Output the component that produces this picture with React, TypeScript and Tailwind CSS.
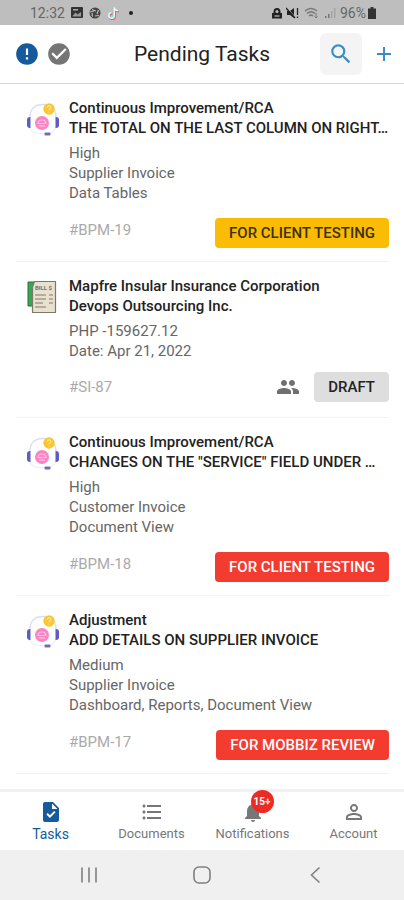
import type { ReactNode } from "react"
import { MdCheckCircle, MdError, MdSearch, MdAdd, MdPeople, MdNotifications, MdPersonOutline, MdFormatListBulleted, MdTask } from "react-icons/md"

interface Task {
  id: string
  kind: "ticket" | "bill"
  title: string
  subtitle: string
  details: string[]
  status: string
  tone: "amber" | "red" | "gray"
}

const tasks: Task[] = [
  {
    id: "#BPM-19",
    kind: "ticket",
    title: "Continuous Improvement/RCA",
    subtitle: "THE TOTAL ON THE LAST COLUMN ON RIGHT…",
    details: ["High", "Supplier Invoice", "Data Tables"],
    status: "FOR CLIENT TESTING",
    tone: "amber",
  },
  {
    id: "#SI-87",
    kind: "bill",
    title: "Mapfre Insular Insurance Corporation",
    subtitle: "Devops Outsourcing Inc.",
    details: ["PHP -159627.12", "Date: Apr 21, 2022"],
    status: "DRAFT",
    tone: "gray",
  },
  {
    id: "#BPM-18",
    kind: "ticket",
    title: "Continuous Improvement/RCA",
    subtitle: "CHANGES ON THE \"SERVICE\" FIELD UNDER …",
    details: ["High", "Customer Invoice", "Document View"],
    status: "FOR CLIENT TESTING",
    tone: "red",
  },
  {
    id: "#BPM-17",
    kind: "ticket",
    title: "Adjustment",
    subtitle: "ADD DETAILS ON SUPPLIER INVOICE",
    details: ["Medium", "Supplier Invoice", "Dashboard, Reports, Document View"],
    status: "FOR MOBBIZ REVIEW",
    tone: "red",
  },
]

const tones = {
  amber: "bg-[#fbbc05] text-[#3f3107]",
  red: "bg-[#f33b30] text-white",
  gray: "bg-[#dedede] text-[#222222]",
}

function TicketIcon() {
  return (
    <svg viewBox="0 0 34 34" className="size-[34px]" aria-hidden="true">
      <path d="M4 15C4 7 9 2.500 17 2.500S30 7 30 15" fill="none" stroke="#dcdafa" strokeWidth="1.500" />
      <path d="M3.500 24c1 6 5 8 15 7.500M30 24c-.5 4-3 6.500-7 7.500" fill="none" stroke="#eeedf8" strokeWidth="1.200" />
      <path d="M4.500 15v11H4a3 3 0 0 1-3-3v-5a3 3 0 0 1 3-3z" fill="#5f5bc0" />
      <path d="M29.500 15v11h.5a3 3 0 0 0 3-3v-5a3 3 0 0 0-3-3z" fill="#5f5bc0" />
      <rect x="18.500" y="30.500" width="6" height="3" rx="1" fill="#6b70be" />
      <circle cx="16" cy="21" r="7" fill="#fb84c4" />
      <path d="M12 21.500a4 3.500 0 0 1 8 0z" fill="#fb84c4" stroke="#ffc4e2" strokeWidth="1.200" />
      <path d="M13 24h6" stroke="#ffc4e2" strokeWidth="1.200" />
      <circle cx="23" cy="7" r="5.700" fill="#fbc62d" />
      <path d="M21.300 5.700a1.800 1.800 0 1 1 2.500 1.600q-.8.400-.8 1.300M23 9.800v.8" fill="none" stroke="#ffe68e" strokeWidth="1.200" />
    </svg>
  )
}

function BillIcon() {
  return (
    <svg viewBox="0 0 34 34" className="size-[34px]" aria-hidden="true">
      <path d="M2 2h9v24H2z" fill="#35a852" stroke="#2c6b3e" strokeWidth="1" />
      <path d="M8.500 1.500h21v31h-23V7z" fill="#e9e1d0" stroke="#7d766a" strokeWidth="1.200" strokeLinejoin="round" />
      <text x="9" y="10" fontSize="6" fontWeight="700" fill="#7b7165" fontFamily="Roboto">BILL $</text>
      <path d="M9 15h11M23 15h4M9 19h11M23 19h4M9 23h8M23 23h4M9 27h11" stroke="#82786b" strokeWidth="1.200" />
    </svg>
  )
}

function StatusBar() {
  return (
    <div className="flex h-[25px] items-center justify-between bg-[#bebebe] pr-7 pl-[30px] text-[#666666]">
      <div className="flex items-center gap-1.5">
        <span className="text-[14px] leading-5">12:32</span>
        <svg viewBox="0 0 12 12" className="size-3" aria-hidden="true">
          <rect width="12" height="11" rx="1" fill="#333333" />
          <path d="M1.500 9l3-3.500 2 2L10 5v4.500H1.500z" fill="#999999" />
          <path d="M2 2h5v1.500H2z" fill="#aaaaaa" />
        </svg>
        <svg viewBox="0 0 12 12" className="size-3" aria-hidden="true">
          <circle cx="6" cy="6" r="5.500" fill="#444444" />
          <path d="M3 2.500l4 1.500M9.500 3l-1.500 4M10 8.500L6 9M3.500 9.500L3 6M1 5l4-1" stroke="#bebebe" strokeWidth="1.200" />
        </svg>
        <svg viewBox="0 0 12 14" className="h-3.5 w-3" fill="none" strokeWidth="2" aria-hidden="true">
          <path d="M7.500 1.500v8a2.800 2.800 0 1 1-2.800-2.800M7.500 1.500q.5 3 4 3.300" stroke="#ef5a7a" transform="translate(.5 .8)" />
          <path d="M7 1v8a2.800 2.800 0 1 1-2.800-2.800M7 1q.5 3 4 3.300" stroke="#6ee0dc" />
          <path d="M7.300 1.400v8a2.800 2.800 0 1 1-2.800-2.800M7.300 1.400q.5 3 4 3.300" stroke="#ffffff" strokeWidth="1.200" />
        </svg>
        <span className="ml-1 size-1 rounded-full bg-[#222222]" />
      </div>
      <div className="flex items-center gap-1">
        <svg viewBox="0 0 10 12" className="h-3 w-2.5" aria-hidden="true">
          <path d="M1.500 5a3.500 4 0 0 1 7 0v1H10v5.500H0V6h1.500z" fill="#222222" />
          <circle cx="5" cy="4.500" r="1.500" fill="#bebebe" />
          <path d="M2.500 9h5" stroke="#bebebe" strokeWidth="1.200" />
        </svg>
        <svg viewBox="0 0 14 12" className="h-3 w-3.5" aria-hidden="true">
          <path d="M1 4h3l4-3v10L4 8H1z" fill="#222222" />
          <path d="M1 1l9 10" stroke="#bebebe" strokeWidth="1" />
          <path d="M0 1l9 10M11.500 1v7M11.500 9.500v1.500" stroke="#222222" strokeWidth="1.300" />
        </svg>
        <svg viewBox="0 0 16 12" className="h-3 w-4" fill="none" stroke="#777777" strokeWidth="1.400" aria-hidden="true">
          <path d="M1 4q6-5 12 0M3 6.500q4-3.500 8 0M5 9q2-2 4 0" />
          <path d="M12 6v5M10.500 9.500L12 11l1.500-1.500" strokeWidth="1" />
        </svg>
        <svg viewBox="0 0 12 12" className="size-3" aria-hidden="true">
          <path d="M1 9h1.500v2H1zM4 7h1.500v4H4z" fill="#777777" />
          <path d="M7 4h1.500v7H7zM10 1h1.500v10H10z" fill="#a3a3a3" />
        </svg>
        <div className="flex items-center gap-0.5">
          <span className="text-[14px] leading-5">96%</span>
          <svg viewBox="0 0 8 12" className="h-3 w-2" aria-hidden="true">
            <path d="M2.500 0h3v1.500H8V12H0V1.500h2.500z" fill="#333333" />
          </svg>
        </div>
      </div>
    </div>
  )
}

function Header() {
  return (
    <header className="grid h-[59px] grid-cols-[1fr_auto_1fr] items-center border-b border-[#d8d8d8] px-2">
      <div className="flex gap-1.5 pl-1.5">
        <button aria-label="Overdue"><MdError className="size-[26px] text-[#145a9c]" /></button>
        <button aria-label="Completed"><MdCheckCircle className="size-[26px] text-[#757575]" /></button>
      </div>
      <h1 className="text-[21px] leading-7 text-[#222222]">Pending Tasks</h1>
      <div className="flex items-center justify-end gap-2.5 text-[#3d8cc4]">
        <button aria-label="Search" className="rounded-md bg-[#f4f4f4] p-2"><MdSearch className="size-[26px]" /></button>
        <button aria-label="Add task"><MdAdd className="size-6" /></button>
      </div>
    </header>
  )
}

function TaskItem({ task }: { task: Task }) {
  const isBill = task.kind === "bill"

  return (
    <li className={`mr-[15px] ml-4 flex gap-2 border-b border-[#f3f3f3] pt-3.5 ${isBill ? "pb-[15px]" : "pb-[13px]"}`}>
      <div className="w-[45px] shrink-0 pt-1 pl-2.5">
        {isBill ? <BillIcon /> : <TicketIcon />}
      </div>
      <div className="min-w-0 flex-1">
        <h2 className="truncate text-[15px] leading-5 font-medium text-[#222222]">{task.title}</h2>
        <p className="truncate text-[15px] leading-5 font-medium text-[#222222]">{task.subtitle}</p>
        <div className="mt-[5px] text-[15px] leading-5 text-[#666666]">
          {task.details.map((line) => (
            <p key={line}>{line}</p>
          ))}
        </div>
        <div className={`flex ${isBill ? "mt-[11px] items-center" : "mt-[15px] items-start"}`}>
          <span className="flex-1 text-[15px] leading-6 text-[#aaaaaa]">{task.id}</span>
          {isBill && <MdPeople className="mr-3.5 size-6 text-[#707070]" aria-hidden="true" />}
          <button className={`rounded-sm px-3.5 py-[5px] text-[15px] leading-5 font-medium ${tones[task.tone]}`}>
            {task.status}
          </button>
        </div>
      </div>
    </li>
  )
}

function NavLink({ label, active, children }: { label: string; active?: boolean; children: ReactNode }) {
  return (
    <a
      href="#"
      aria-current={active ? "page" : undefined}
      className={`flex flex-1 flex-col items-center pt-2 ${active ? "text-[14px] text-[#145a9c]" : "text-[13px] text-[#777777]"}`}
    >
      {children}
      <span className="leading-5">{label}</span>
    </a>
  )
}

export default function App() {
  return (
    <div className="flex min-h-screen flex-col bg-white font-[Roboto,sans-serif]">
      <StatusBar />
      <Header />
      <main className="flex-1">
        <ul>
          {tasks.map((task) => (
            <TaskItem key={task.id} task={task} />
          ))}
        </ul>
      </main>
      <nav className="flex h-[61px] border-t-3 border-[#f1f1f1]">
        <NavLink label="Tasks" active><MdTask className="size-6" /></NavLink>
        <NavLink label="Documents"><MdFormatListBulleted className="size-6" /></NavLink>
        <NavLink label="Notifications">
          <span className="relative">
            <MdNotifications className="size-6" />
            <span className="absolute -top-2.5 left-2.5 flex size-[23px] items-center justify-center rounded-full bg-[#ec2c24] text-[10px] font-bold text-white">15+</span>
          </span>
        </NavLink>
        <NavLink label="Account"><MdPersonOutline className="size-6" /></NavLink>
      </nav>
      <div className="flex h-[50px] items-center justify-center bg-[#f0f0f0] text-[#808080]">
        <button aria-label="Recent apps" className="w-[113px]">
          <svg viewBox="0 0 18 18" className="mx-auto size-[18px]" fill="none" stroke="currentColor" strokeWidth="1.600">
            <path d="M2 1.500v15M9 1.500v15M16 1.500v15" />
          </svg>
        </button>
        <button aria-label="Home" className="w-[113px]">
          <svg viewBox="0 0 18 18" className="mx-auto size-[18px]" fill="none" stroke="currentColor" strokeWidth="1.600">
            <rect x="1" y="1" width="16" height="16" rx="5" />
          </svg>
        </button>
        <button aria-label="Back" className="w-[113px]">
          <svg viewBox="0 0 18 18" className="mx-auto size-[18px]" fill="none" stroke="currentColor" strokeWidth="1.600">
            <path d="M13.500 1.500L5.500 9l8 7.500" />
          </svg>
        </button>
      </div>
    </div>
  )
}
